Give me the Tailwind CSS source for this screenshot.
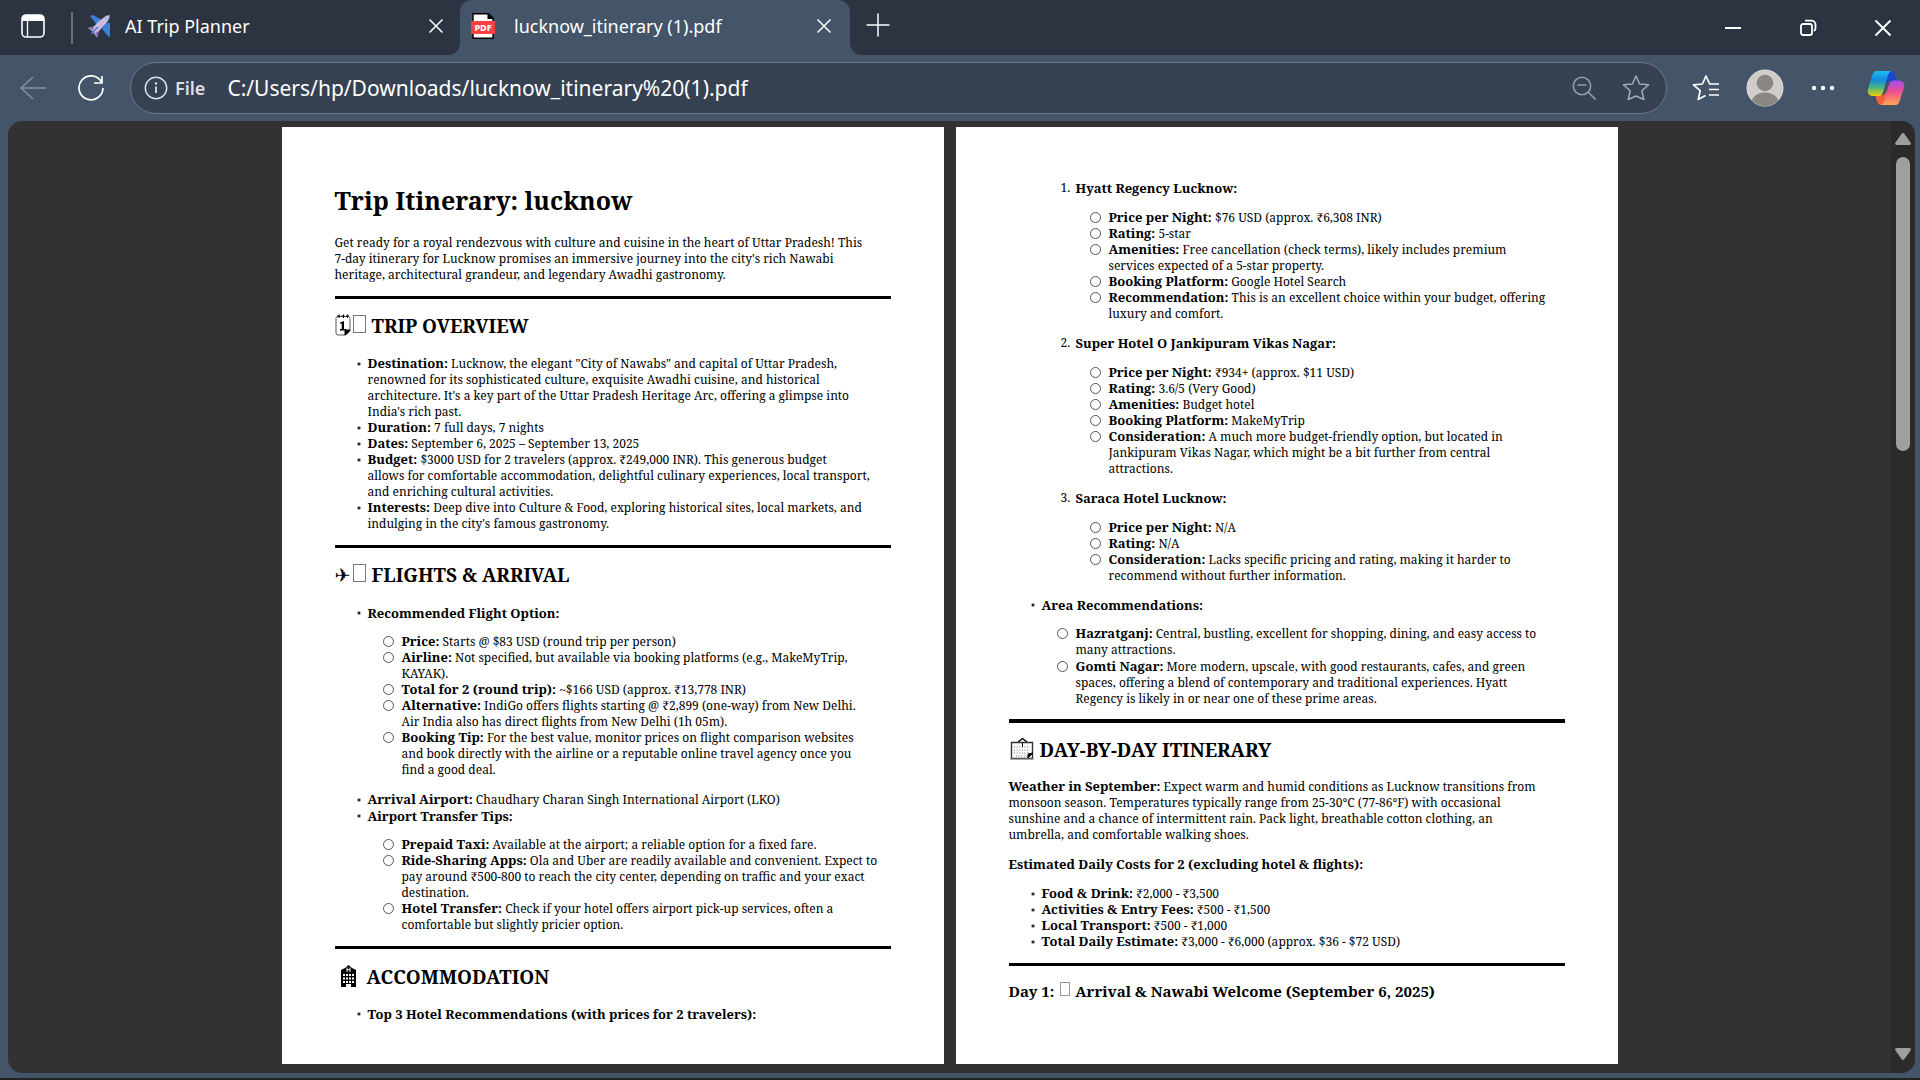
<!DOCTYPE html>
<html lang="en">
<head>
<meta charset="utf-8">
<title>lucknow_itinerary (1).pdf</title>
<script src="https://cdn.jsdelivr.net/npm/@tailwindcss/browser@4"></script>
</head>
<body class="flex h-screen min-h-[600px] flex-col overflow-hidden bg-[#445469] font-['Noto_Sans',sans-serif] text-white">

<!-- Tab strip -->
<header class="flex h-[55px] shrink-0">
  <div class="flex w-[460px] shrink-0 items-center rounded-br-[12px] bg-[#2b3440] pb-[3px] pl-[21px]">
    <button aria-label="Tab actions" class="size-6"><svg viewBox="0 0 24 24" class="size-6"><rect x="1" y="1" width="22" height="22" rx="4" fill="none" stroke="#fff" stroke-width="1.6"/><path d="M1 7V5a4 4 0 0 1 4-4h14a4 4 0 0 1 4 4v2z" fill="#fff"/><path d="M6.5 7v16" stroke="#fff" stroke-width="1.3"/></svg></button>
    <span class="ml-[26px] mt-[3px] h-8 w-[2px] bg-[#67727f]"></span>
    <button class="ml-[14px] flex flex-1 items-center text-left text-[18px] leading-6">
      <svg viewBox="0 0 24 24" class="mr-[14px] size-6"><path d="M3 2l3-1 9 5-5 5zM23 9v14l-2-1-6-7 4-6z" fill="#3f7fdc"/><path d="M22.500 1C17 1 7 12.500 7 12.500L1 14l5 4 4 5.500 1.500-6C16 13 24 5 22.500 1z" fill="#cdb9dd"/><path d="M17.500 4.500l4.500-1-1.500 4.500z" fill="#8fc4ea"/><path d="M1 14l6-1.500-1 4zM10 23.500l1.500-6-3.500 1z" fill="#8a6fb5"/><path d="M4 20l7-7" stroke="#3f7fdc" stroke-width="1.500"/></svg>
      AI Trip Planner
    </button>
    <button aria-label="Close tab" class="mr-[16px] size-4"><svg viewBox="0 0 16 16" class="size-4"><path d="M1.500 1.500l13 13m0-13l-13 13" stroke="#fff" stroke-width="1.500"/></svg></button>
  </div>
  <div class="w-[390px] shrink-0 bg-[#2b3440]">
    <div class="flex h-full items-center rounded-t-[12px] bg-[#445469] pb-[3px] pl-[11px]">
      <button class="flex flex-1 items-center text-left text-[18px] leading-6">
        <svg viewBox="0 0 24 26" class="mr-[19px] h-[26px] w-6"><path d="M2 .7h15.500L22 5v20.300H2z" fill="#fff" stroke="#000" stroke-width="1.400"/><path d="M16.500 0v6H23z" fill="#000"/><rect y="8" width="24" height="13" fill="#fa4040"/><text x="12" y="17.500" text-anchor="middle" font-family="Noto Sans" font-size="9" font-weight="800" fill="#fff">PDF</text></svg>
        lucknow_itinerary (1).pdf
      </button>
      <button aria-label="Close tab" class="mr-[18px] size-4"><svg viewBox="0 0 16 16" class="size-4"><path d="M1.500 1.500l13 13m0-13l-13 13" stroke="#fff" stroke-width="1.500"/></svg></button>
    </div>
  </div>
  <div class="flex flex-1 items-center rounded-bl-[12px] bg-[#2b3440] pl-[16px] pr-[28px]">
    <button aria-label="New tab" class="mb-[5px] size-6"><svg viewBox="0 0 24 24" class="size-6"><path d="M12 .5v23M.5 12h23" stroke="#fff" stroke-width="1.500"/></svg></button>
    <div class="ml-auto flex items-center gap-[57px]">
      <button aria-label="Minimize" class="size-[18px]"><svg viewBox="0 0 18 18" class="size-[18px]"><path d="M1 9h16" stroke="#fff" stroke-width="2"/></svg></button>
      <button aria-label="Restore" class="size-[18px]"><svg viewBox="0 0 18 18" class="size-[18px]" fill="none" stroke="#fff" stroke-width="1.800"><rect x="2" y="5" width="11" height="11" rx="2"/><path d="M6 1.600h6.500a4 4 0 0 1 4 4V9c0 1.500-.7 2.400-1.500 3"/></svg></button>
      <button aria-label="Close window" class="size-[18px]"><svg viewBox="0 0 18 18" class="size-[18px]"><path d="M1.500 1.500l15 15m0-15l-15 15" stroke="#fff" stroke-width="1.900"/></svg></button>
    </div>
  </div>
</header>

<!-- Toolbar -->
<nav class="flex h-[66px] shrink-0 items-center pl-[20px] pr-[15px]">
  <button aria-label="Back" class="h-6 w-[26px]"><svg viewBox="0 0 26 24" class="h-6 w-[26px]" fill="none" stroke="#8793a2" stroke-width="1.500"><path d="M13 1L1 12l12 11M1 12h25"/></svg></button>
  <button aria-label="Refresh" class="ml-[32px] size-[26px]"><svg viewBox="0 0 26 26" class="size-[26px]" fill="none" stroke="#fff" stroke-width="1.700"><path d="M23.500 7A12 12 0 1 0 25 13M24 1v7h-8"/></svg></button>
  <div class="ml-[26px] flex h-[52px] flex-1 items-center rounded-full border border-[#6c7784] bg-[#364152] pl-[13px] pr-[16px]">
    <button class="flex items-center text-[18px] font-semibold leading-6 text-[#dcdfe3]"><svg viewBox="0 0 24 24" class="mr-[7px] size-6"><circle cx="12" cy="12" r="10.700" fill="none" stroke="#dcdfe3" stroke-width="1.500"/><path d="M12 10.500V17" stroke="#dcdfe3" stroke-width="1.800"/><circle cx="12" cy="7.500" r="1.200" fill="#dcdfe3"/></svg>File</button>
    <input aria-label="Address" value="C:/Users/hp/Downloads/lucknow_itinerary%20(1).pdf" class="ml-[22px] min-w-0 flex-1 bg-transparent text-[21px] leading-8 outline-none">
    <button aria-label="Zoom out" class="size-6"><svg viewBox="0 0 24 24" class="size-6" fill="none" stroke="#939ba6" stroke-width="1.600"><circle cx="10" cy="10" r="8.700"/><path d="M16.300 16.300L23.500 23.500M5.500 9h9"/></svg></button>
    <button aria-label="Add to favorites" class="ml-[26px] size-[28px]"><svg viewBox="0 0 28 28" class="size-[28px]" fill="none" stroke="#a3abb5" stroke-width="1.500" stroke-linejoin="round"><path d="M14 2l3.600 8 9 .8-6.800 5.900 2 8.800L14 22l-7.800 3.500 2-8.800L1.400 10.800l9-.8z"/></svg></button>
  </div>
  <button aria-label="Favorites" class="ml-[25px] size-[28px]"><svg viewBox="0 0 28 28" class="size-[28px]" fill="none" stroke="#fff" stroke-width="1.700" stroke-linejoin="round"><path d="M20.500 10h-2.800L14 2l-3.600 8-9 .8 6.800 5.900-2 8.800 7.300-4M17 10h10M17 15.500h10M17 21h10"/></svg></button>
  <button aria-label="Profile" class="ml-[26px] size-[38px]"><svg viewBox="0 0 38 38" class="size-[38px]"><defs><clipPath id="face"><circle cx="19" cy="19" r="18"/></clipPath></defs><circle cx="19" cy="19" r="18" fill="#cfccc9" stroke="#e4e2e0"/><g fill="#8a8683" clip-path="url(#face)"><circle cx="19" cy="14" r="8.300"/><ellipse cx="19" cy="34" rx="13.500" ry="10.500"/></g></svg></button>
  <button aria-label="Settings and more" class="ml-[27px] h-6 w-[24px]"><svg viewBox="0 0 24 24" class="size-6" fill="#fff"><circle cx="3" cy="12" r="2.200"/><circle cx="12" cy="12" r="2.200"/><circle cx="21" cy="12" r="2.200"/></svg></button>
  <button aria-label="Copilot" class="ml-[32px] h-[34px] w-[38px]"><svg viewBox="0 0 38 34" class="h-[34px] w-[38px]"><defs><linearGradient id="ca" x1="0" y1="0" x2="0" y2="1"><stop offset="0" stop-color="#19c0f4"/><stop offset=".35" stop-color="#1489e0"/><stop offset=".65" stop-color="#45b487"/><stop offset="1" stop-color="#f5d000"/></linearGradient><linearGradient id="cb" x1="0" y1="0" x2="0" y2="1"><stop offset="0" stop-color="#a44df0"/><stop offset=".45" stop-color="#ee4f90"/><stop offset="1" stop-color="#ffa852"/></linearGradient></defs><path d="M20 0h3c3 0 4 1 5 4l2 6h-7c-3 0-4 3-5 6z" fill="#1848cf"/><path d="M18 34h-3c-3 0-4-1-5-4l-2-6h7c3 0 4-3 5-6z" fill="#f6603c"/><path d="M10 0h15c-2 0-3 2-4 4l-4.500 16c-1 3-2 5-6 5H6c-4 0-6-3-5-7L5 5c1-3 2-5 5-5z" fill="url(#ca)"/><path d="M28 34H13c2 0 3-2 4-4l4.500-15c1-3 2-5.500 6-5.500H32c4 0 6 3 5 7L33 29c-1 3-2 5-5 5z" fill="url(#cb)"/><path d="M21.500 10.500L18.500 21q-1 3-3 3.500L19 12q.8-1.500 2.500-1.500z" fill="#445469"/></svg></button>
</nav>

<!-- PDF viewer -->
<div class="mb-[5px] ml-[8px] mr-[5px] flex min-h-0 flex-1 overflow-hidden rounded-[14px] bg-[#323232]">
<main class="flex flex-1 justify-center gap-[12px] pb-[9px] pt-[6px] font-['Noto_Serif','Liberation_Serif',serif] text-[12px] leading-4 text-black [&_b]:text-[13px] [&_b]:leading-none [&_div>b]:leading-4 [&_li>b]:leading-4">

  <article class="max-w-[662px] flex-1 whitespace-nowrap bg-white px-[53px] pt-[57px]">
    <h1 class="text-[25px] font-bold leading-8">Trip Itinerary: lucknow</h1>
    <p class="mt-[19px]">Get ready for a royal rendezvous with culture and cuisine in the heart of Uttar Pradesh! This<br>7-day itinerary for Lucknow promises an immersive journey into the city's rich Nawabi<br>heritage, architectural grandeur, and legendary Awadhi gastronomy.</p>
    <hr class="mt-[13px] border-t-[3px] border-black">
    <h2 class="mt-[15px] flex h-6 text-[19px] font-bold leading-6">
      <svg viewBox="0 0 16 22" class="h-[22px] w-4"><path d="M1 4.500q0-2 2-2h10q2 0 2 2V17l-4 4H3q-2 0-2-2z" fill="none" stroke="#555"/><path d="M15 16l-5 5v-4q0-1 1-1z" stroke="#000"/><path d="M2 2h3M6.500 2h3M11 2h3M4 .5v3.500M8.500 .5v3.500M12.500 .5v3.500" stroke="#000"/><path d="M5 8.500L9 7v8h2v1.500H5V15h1.700V9.500H5z" fill="#000"/></svg>
      <span class="ml-[2px] mt-[1px] h-[18px] w-[13px] border border-[#777]"></span><span class="ml-[6px]">TRIP OVERVIEW</span></h2>
    <ul class="mt-[18px]">
      <li class="flex"><i class="ml-[23px] mr-[8px] mt-[7px] size-[2px] shrink-0 rounded-full bg-black ring-1 ring-black/40"></i><span><b>Destination:</b> Lucknow, the elegant "City of Nawabs" and capital of Uttar Pradesh,<br>renowned for its sophisticated culture, exquisite Awadhi cuisine, and historical<br>architecture. It's a key part of the Uttar Pradesh Heritage Arc, offering a glimpse into<br>India's rich past.</span></li>
      <li class="flex"><i class="ml-[23px] mr-[8px] mt-[7px] size-[2px] shrink-0 rounded-full bg-black ring-1 ring-black/40"></i><span><b>Duration:</b> 7 full days, 7 nights</span></li>
      <li class="flex"><i class="ml-[23px] mr-[8px] mt-[7px] size-[2px] shrink-0 rounded-full bg-black ring-1 ring-black/40"></i><span><b>Dates:</b> September 6, 2025 – September 13, 2025</span></li>
      <li class="flex"><i class="ml-[23px] mr-[8px] mt-[7px] size-[2px] shrink-0 rounded-full bg-black ring-1 ring-black/40"></i><span><b>Budget:</b> $3000 USD for 2 travelers (approx. ₹249,000 INR). This generous budget<br>allows for comfortable accommodation, delightful culinary experiences, local transport,<br>and enriching cultural activities.</span></li>
      <li class="flex"><i class="ml-[23px] mr-[8px] mt-[7px] size-[2px] shrink-0 rounded-full bg-black ring-1 ring-black/40"></i><span><b>Interests:</b> Deep dive into Culture &amp; Food, exploring historical sites, local markets, and<br>indulging in the city's famous gastronomy.</span></li>
    </ul>
    <hr class="mt-[13px] border-t-[3px] border-black">
    <h2 class="mt-[15px] flex h-6 text-[19px] font-bold leading-6">
      <span class="w-4 font-['DejaVu_Sans',sans-serif] text-[19px] font-normal">✈</span>
      <span class="ml-[2px] mt-[1px] h-[18px] w-[13px] border border-[#777]"></span><span class="ml-[6px]">FLIGHTS &amp; ARRIVAL</span></h2>
    <ul class="mt-[18px]">
      <li class="flex"><i class="ml-[23px] mr-[8px] mt-[7px] size-[2px] shrink-0 rounded-full bg-black ring-1 ring-black/40"></i><b>Recommended Flight Option:</b></li>
      <li><ul class="mb-[14px] mt-[13px] pl-[48px]">
        <li class="flex"><i class="mr-[8px] mt-[2px] size-[11px] shrink-0 rounded-full border border-[#555]"></i><span><b>Price:</b> Starts @ $83 USD (round trip per person)</span></li>
        <li class="flex"><i class="mr-[8px] mt-[2px] size-[11px] shrink-0 rounded-full border border-[#555]"></i><span><b>Airline:</b> Not specified, but available via booking platforms (e.g., MakeMyTrip,<br>KAYAK).</span></li>
        <li class="flex"><i class="mr-[8px] mt-[2px] size-[11px] shrink-0 rounded-full border border-[#555]"></i><span><b>Total for 2 (round trip):</b> ~$166 USD (approx. ₹13,778 INR)</span></li>
        <li class="flex"><i class="mr-[8px] mt-[2px] size-[11px] shrink-0 rounded-full border border-[#555]"></i><span><b>Alternative:</b> IndiGo offers flights starting @ ₹2,899 (one-way) from New Delhi.<br>Air India also has direct flights from New Delhi (1h 05m).</span></li>
        <li class="flex"><i class="mr-[8px] mt-[2px] size-[11px] shrink-0 rounded-full border border-[#555]"></i><span><b>Booking Tip:</b> For the best value, monitor prices on flight comparison websites<br>and book directly with the airline or a reputable online travel agency once you<br>find a good deal.</span></li>
      </ul></li>
      <li class="flex"><i class="ml-[23px] mr-[8px] mt-[7px] size-[2px] shrink-0 rounded-full bg-black ring-1 ring-black/40"></i><span><b>Arrival Airport:</b> Chaudhary Charan Singh International Airport (LKO)</span></li>
      <li class="flex"><i class="ml-[23px] mr-[8px] mt-[7px] size-[2px] shrink-0 rounded-full bg-black ring-1 ring-black/40"></i><b>Airport Transfer Tips:</b></li>
      <li><ul class="mt-[13px] pl-[48px]">
        <li class="flex"><i class="mr-[8px] mt-[2px] size-[11px] shrink-0 rounded-full border border-[#555]"></i><span><b>Prepaid Taxi:</b> Available at the airport; a reliable option for a fixed fare.</span></li>
        <li class="flex"><i class="mr-[8px] mt-[2px] size-[11px] shrink-0 rounded-full border border-[#555]"></i><span><b>Ride-Sharing Apps:</b> Ola and Uber are readily available and convenient. Expect to<br>pay around ₹500-800 to reach the city center, depending on traffic and your exact<br>destination.</span></li>
        <li class="flex"><i class="mr-[8px] mt-[2px] size-[11px] shrink-0 rounded-full border border-[#555]"></i><span><b>Hotel Transfer:</b> Check if your hotel offers airport pick-up services, often a<br>comfortable but slightly pricier option.</span></li>
      </ul></li>
    </ul>
    <hr class="mt-[13px] border-t-[3px] border-black">
    <h2 class="mt-[16px] flex h-6 text-[19px] font-bold leading-6">
      <svg viewBox="0 0 17 22" class="ml-[5px] h-[22px] w-[17px]"><path d="M1 22V5L5 3l3.500-3L12 3l4 2v17h-5v-3H6v3z" fill="#000"/><path d="M7 2.500V7M10 2.500V7M7 4.700h3" stroke="#fff"/><g fill="#fff"><path d="M3 9h2v2H3zM6 9h2v2H6zM9 9h2v2H9zM12 9h2v2h-2zM3 12.500h2v2H3zM6 12.500h2v2H6zM9 12.500h2v2H9zM12 12.500h2v2h-2zM3 16h2v2H3zM6 16h2v2H6zM9 16h2v2H9zM12 16h2v2h-2z"/></g></svg>
      <span class="ml-[10px]">ACCOMMODATION</span></h2>
    <ul class="mt-[17px]">
      <li class="flex"><i class="ml-[23px] mr-[8px] mt-[7px] size-[2px] shrink-0 rounded-full bg-black ring-1 ring-black/40"></i><b>Top 3 Hotel Recommendations (with prices for 2 travelers):</b></li>
    </ul>
  </article>

  <article class="max-w-[662px] flex-1 whitespace-nowrap bg-white px-[53px] pt-[53px]">
    <ol class="pl-[52px]">
      <li><div class="flex"><span class="w-[15px]">1.</span><b>Hyatt Regency Lucknow:</b></div>
        <ul class="mb-[13px] mt-[14px] pl-[29px]">
          <li class="flex"><i class="mr-[8px] mt-[2px] size-[11px] shrink-0 rounded-full border border-[#555]"></i><span><b>Price per Night:</b> $76 USD (approx. ₹6,308 INR)</span></li>
          <li class="flex"><i class="mr-[8px] mt-[2px] size-[11px] shrink-0 rounded-full border border-[#555]"></i><span><b>Rating:</b> 5-star</span></li>
          <li class="flex"><i class="mr-[8px] mt-[2px] size-[11px] shrink-0 rounded-full border border-[#555]"></i><span><b>Amenities:</b> Free cancellation (check terms), likely includes premium<br>services expected of a 5-star property.</span></li>
          <li class="flex"><i class="mr-[8px] mt-[2px] size-[11px] shrink-0 rounded-full border border-[#555]"></i><span><b>Booking Platform:</b> Google Hotel Search</span></li>
          <li class="flex"><i class="mr-[8px] mt-[2px] size-[11px] shrink-0 rounded-full border border-[#555]"></i><span><b>Recommendation:</b> This is an excellent choice within your budget, offering<br>luxury and comfort.</span></li>
        </ul></li>
      <li><div class="flex"><span class="w-[15px]">2.</span><b>Super Hotel O Jankipuram Vikas Nagar:</b></div>
        <ul class="mb-[13px] mt-[14px] pl-[29px]">
          <li class="flex"><i class="mr-[8px] mt-[2px] size-[11px] shrink-0 rounded-full border border-[#555]"></i><span><b>Price per Night:</b> ₹934+ (approx. $11 USD)</span></li>
          <li class="flex"><i class="mr-[8px] mt-[2px] size-[11px] shrink-0 rounded-full border border-[#555]"></i><span><b>Rating:</b> 3.6/5 (Very Good)</span></li>
          <li class="flex"><i class="mr-[8px] mt-[2px] size-[11px] shrink-0 rounded-full border border-[#555]"></i><span><b>Amenities:</b> Budget hotel</span></li>
          <li class="flex"><i class="mr-[8px] mt-[2px] size-[11px] shrink-0 rounded-full border border-[#555]"></i><span><b>Booking Platform:</b> MakeMyTrip</span></li>
          <li class="flex"><i class="mr-[8px] mt-[2px] size-[11px] shrink-0 rounded-full border border-[#555]"></i><span><b>Consideration:</b> A much more budget-friendly option, but located in<br>Jankipuram Vikas Nagar, which might be a bit further from central<br>attractions.</span></li>
        </ul></li>
      <li><div class="flex"><span class="w-[15px]">3.</span><b>Saraca Hotel Lucknow:</b></div>
        <ul class="mb-[13px] mt-[14px] pl-[29px]">
          <li class="flex"><i class="mr-[8px] mt-[2px] size-[11px] shrink-0 rounded-full border border-[#555]"></i><span><b>Price per Night:</b> N/A</span></li>
          <li class="flex"><i class="mr-[8px] mt-[2px] size-[11px] shrink-0 rounded-full border border-[#555]"></i><span><b>Rating:</b> N/A</span></li>
          <li class="flex"><i class="mr-[8px] mt-[2px] size-[11px] shrink-0 rounded-full border border-[#555]"></i><span><b>Consideration:</b> Lacks specific pricing and rating, making it harder to<br>recommend without further information.</span></li>
        </ul></li>
    </ol>
    <ul>
      <li class="flex"><i class="ml-[23px] mr-[8px] mt-[7px] size-[2px] shrink-0 rounded-full bg-black ring-1 ring-black/40"></i><b>Area Recommendations:</b></li>
      <li><ul class="mt-[13px] pl-[48px]">
        <li class="flex"><i class="mr-[8px] mt-[2px] size-[11px] shrink-0 rounded-full border border-[#555]"></i><span><b>Hazratganj:</b> Central, bustling, excellent for shopping, dining, and easy access to<br>many attractions.</span></li>
        <li class="flex pt-px"><i class="mr-[8px] mt-[2px] size-[11px] shrink-0 rounded-full border border-[#555]"></i><span><b>Gomti Nagar:</b> More modern, upscale, with good restaurants, cafes, and green<br>spaces, offering a blend of contemporary and traditional experiences. Hyatt<br>Regency is likely in or near one of these prime areas.</span></li>
      </ul></li>
    </ul>
    <hr class="mt-[12px] border-t-[4px] border-black">
    <h2 class="mt-[15px] flex h-6 text-[19px] font-bold leading-6">
      <svg viewBox="0 0 24 22" class="ml-[1px] h-[22px] w-6" fill="none" stroke="#000"><path d="M8 4l4.500-3.500L17 4" stroke-width="1.400"/><path d="M1.500 4.500h21v16h-21z" stroke="#333" stroke-width="1.400"/><path d="M0 21h24" stroke="#888"/><path d="M4 9h16M4 12h16M4 15h14M6 18h12" stroke="#777" stroke-dasharray="1 1.600"/><path d="M12.500 5v4" /><path d="M23 15l-5 5v-4z" fill="#000"/></svg>
      <span class="ml-[6px]">DAY-BY-DAY ITINERARY</span></h2>
    <p class="mt-[17px]"><b>Weather in September:</b> Expect warm and humid conditions as Lucknow transitions from<br>monsoon season. Temperatures typically range from 25-30°C (77-86°F) with occasional<br>sunshine and a chance of intermittent rain. Pack light, breathable cotton clothing, an<br>umbrella, and comfortable walking shoes.</p>
    <p class="mt-[14px]"><b>Estimated Daily Costs for 2 (excluding hotel &amp; flights):</b></p>
    <ul class="mt-[13px]">
      <li class="flex"><i class="ml-[23px] mr-[8px] mt-[7px] size-[2px] shrink-0 rounded-full bg-black ring-1 ring-black/40"></i><span><b>Food &amp; Drink:</b> ₹2,000 - ₹3,500</span></li>
      <li class="flex"><i class="ml-[23px] mr-[8px] mt-[7px] size-[2px] shrink-0 rounded-full bg-black ring-1 ring-black/40"></i><span><b>Activities &amp; Entry Fees:</b> ₹500 - ₹1,500</span></li>
      <li class="flex"><i class="ml-[23px] mr-[8px] mt-[7px] size-[2px] shrink-0 rounded-full bg-black ring-1 ring-black/40"></i><span><b>Local Transport:</b> ₹500 - ₹1,000</span></li>
      <li class="flex"><i class="ml-[23px] mr-[8px] mt-[7px] size-[2px] shrink-0 rounded-full bg-black ring-1 ring-black/40"></i><span><b>Total Daily Estimate:</b> ₹3,000 - ₹6,000 (approx. $36 - $72 USD)</span></li>
    </ul>
    <hr class="mt-[13px] border-t-[3px] border-black">
    <h3 class="mt-[15px] flex text-[15px] font-bold leading-5">Day 1:<span class="ml-[6px] mr-[5px] mt-px h-[14px] w-[10px] border border-[#999]"></span>Arrival &amp; Nawabi Welcome (September 6, 2025)</h3>
  </article>
</main>
<div class="flex w-[24px] shrink-0 flex-col items-center bg-[#2b2b2b] pb-[13px] pt-[12px]">
  <svg viewBox="0 0 16 12" class="h-3 w-4" fill="#9f9f9f"><path d="M6.500 1q1.500-2 3 0L15.500 9.500q1 2-1 2.500h-13q-2-.5-1-2.500z"/></svg>
  <div class="flex w-[14px] flex-1 flex-col pt-[12px]"><div class="h-[33%] rounded-full bg-[#9f9f9f]"></div></div>
  <svg viewBox="0 0 16 12" class="h-3 w-4" fill="#9f9f9f"><path d="M6.500 11q1.500 2 3 0L15.500 2.500q1-2-1-2.500h-13q-2 .5-1 2.500z"/></svg>
</div>
</div>
<footer class="h-[2px] shrink-0 bg-[#20221f]"></footer>
</body>
</html>
